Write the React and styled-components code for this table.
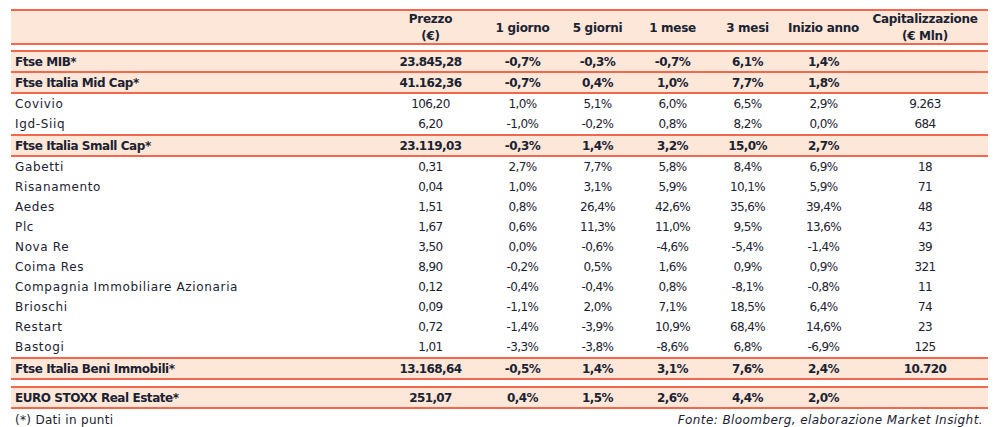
import React from "react"
import styled, { createGlobalStyle } from "styled-components"

const GlobalStyle = createGlobalStyle`
  body {
    margin: 0;
    background: #ffffff;
    font-family: "DejaVu Sans", "Liberation Sans", sans-serif;
    color: #1b2231;
  }
`

const COLS = "365px 109px 75px 75px 75px 75px 77px 1fr"
const CORAL = "#f2674e"
const PEACH = "#fce7d9"

const Page = styled.div`
    width: 977px;
    padding: 9px 0 0 11px;
`

const HeaderRow = styled.div`
    display: grid;
    grid-template-columns: ${COLS};
    height: 32px;
    background: ${PEACH};
    border-top: 2px solid ${CORAL};
    border-bottom: 2px solid ${CORAL};
`

const HeadCell = styled.div`
    display: flex;
    align-items: center;
    justify-content: center;
    text-align: center;
    white-space: nowrap;
    font-weight: bold;
    font-size: 12px;
    letter-spacing: -0.3px;
    line-height: 17px;
`

const Row = styled.div`
    display: grid;
    grid-template-columns: ${COLS};
    height: ${props => props.$hl ? "19px" : "20px"};
    background: ${props => props.$hl ? PEACH : "transparent"};
    border-top: ${props => props.$top ? `2px solid ${CORAL}` : "none"};
    border-bottom: ${props => props.$hl ? `2px solid ${CORAL}` : "none"};
    font-weight: ${props => props.$hl ? "bold" : "normal"};
    font-size: 12px;
`

const Name = styled.div`
    display: flex;
    align-items: center;
    padding-left: 4px;
    white-space: nowrap;
    letter-spacing: ${props => props.$hl ? "-0.45px" : "0.65px"};
`

const Num = styled.div`
    display: flex;
    align-items: center;
    justify-content: center;
    white-space: nowrap;
    letter-spacing: -0.6px;
`

const Gap = styled.div`
    height: ${props => props.$h}px;
`

const Footer = styled.div`
    display: flex;
    justify-content: space-between;
    align-items: center;
    height: 21px;
    padding: 0 5px 0 4px;
    font-size: 12px;
    letter-spacing: 0.3px;
`

const Source = styled.span`
    font-style: italic;
    letter-spacing: 0.42px;
`

const heads = ["", "Prezzo\n(€)", "1 giorno", "5 giorni", "1 mese", "3 mesi", "Inizio anno", "Capitalizzazione\n(€ Mln)"]

const main = [
    { hl: true, top: true, c: ["Ftse MIB*", "23.845,28", "-0,7%", "-0,3%", "-0,7%", "6,1%", "1,4%", ""] },
    { hl: true, c: ["Ftse Italia Mid Cap*", "41.162,36", "-0,7%", "0,4%", "1,0%", "7,7%", "1,8%", ""] },
    { c: ["Covivio", "106,20", "1,0%", "5,1%", "6,0%", "6,5%", "2,9%", "9.263"] },
    { c: ["Igd-Siiq", "6,20", "-1,0%", "-0,2%", "0,8%", "8,2%", "0,0%", "684"] },
    { hl: true, top: true, c: ["Ftse Italia Small Cap*", "23.119,03", "-0,3%", "1,4%", "3,2%", "15,0%", "2,7%", ""] },
    { c: ["Gabetti", "0,31", "2,7%", "7,7%", "5,8%", "8,4%", "6,9%", "18"] },
    { c: ["Risanamento", "0,04", "1,0%", "3,1%", "5,9%", "10,1%", "5,9%", "71"] },
    { c: ["Aedes", "1,51", "0,8%", "26,4%", "42,6%", "35,6%", "39,4%", "48"] },
    { c: ["Plc", "1,67", "0,6%", "11,3%", "11,0%", "9,5%", "13,6%", "43"] },
    { c: ["Nova Re", "3,50", "0,0%", "-0,6%", "-4,6%", "-5,4%", "-1,4%", "39"] },
    { c: ["Coima Res", "8,90", "-0,2%", "0,5%", "1,6%", "0,9%", "0,9%", "321"] },
    { c: ["Compagnia Immobiliare Azionaria", "0,12", "-0,4%", "-0,4%", "0,8%", "-8,1%", "-0,8%", "11"] },
    { c: ["Brioschi", "0,09", "-1,1%", "2,0%", "7,1%", "18,5%", "6,4%", "74"] },
    { c: ["Restart", "0,72", "-1,4%", "-3,9%", "10,9%", "68,4%", "14,6%", "23"] },
    { c: ["Bastogi", "1,01", "-3,3%", "-3,8%", "-8,6%", "6,8%", "-6,9%", "125"] },
    { hl: true, top: true, c: ["Ftse Italia Beni Immobili*", "13.168,64", "-0,5%", "1,4%", "3,1%", "7,6%", "2,4%", "10.720"] },
]

const euro = { hl: true, top: true, c: ["EURO STOXX Real Estate*", "251,07", "0,4%", "1,5%", "2,6%", "4,4%", "2,0%", ""] }

const TableRow = ({ row }) => (
    <Row $hl={row.hl} $top={row.top}>
        <Name $hl={row.hl}>{row.c[0]}</Name>
        {row.c.slice(1).map((v, i) => <Num key={i}>{v}</Num>)}
    </Row>
)

export default function App() {
    return <Page>
        <GlobalStyle />
        <HeaderRow>
            {heads.map((h, i) => (
                <HeadCell key={i}>
                    {h.split("\n").map((l, j) => <React.Fragment key={j}>{j > 0 && <br />}{l}</React.Fragment>)}
                </HeadCell>
            ))}
        </HeaderRow>
        <Gap $h={5} />
        {main.map((r, i) => <TableRow key={i} row={r} />)}
        <Gap $h={6} />
        <TableRow row={euro} />
        <Footer>
            <span>(*) Dati in punti</span>
            <Source>Fonte: Bloomberg, elaborazione Market Insight.</Source>
        </Footer>
    </Page>
}
